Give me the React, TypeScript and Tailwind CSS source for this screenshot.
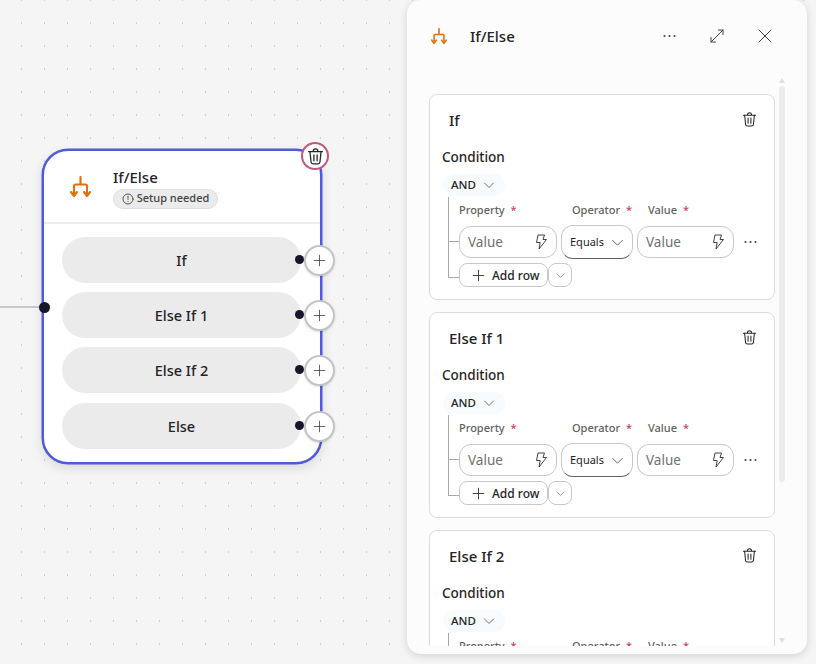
import React from "react";

const font = { fontFamily: '"Noto Sans", "Open Sans", sans-serif' };

function BranchIcon({ size = 21 }: { size?: number }) {
  return (
    <svg width={size} height={size} viewBox="0 0 21 21" fill="none" stroke="#e07010" strokeWidth="2.1" strokeLinecap="round" strokeLinejoin="round">
      <path d="M10.5 1v7.5M4 19.5V10a1.5 1.5 0 0 1 1.5-1.5h10A1.5 1.5 0 0 1 17 10v9.5" />
      <path d="M1 16l3 4 3-4M14 16l3 4 3-4" />
    </svg>
  );
}

function TrashIcon({ size = 16, sw = 1.1 }: { size?: number; sw?: number }) {
  return (
    <svg width={size} height={size} viewBox="0 0 16 16" fill="none" stroke="#242424" strokeWidth={sw} strokeLinecap="round" strokeLinejoin="round">
      <path d="M1.5 3.5h13M5.8 3.5V3a2.2 2.2 0 0 1 4.4 0v.5" />
      <path d="M2.8 3.5l1 9.7a2 2 0 0 0 2 1.8h4.4a2 2 0 0 0 2-1.8l1-9.7" />
      <path d="M6.5 6.5v5.5M9.5 6.5v5.5" />
    </svg>
  );
}

function Chevron({ size = 12, color = "#616161" }: { size?: number; color?: string }) {
  return (
    <svg width={size} height={size} viewBox="0 0 12 12" fill="none" stroke={color} strokeWidth="0.9" strokeLinecap="round" strokeLinejoin="round">
      <path d="M1.5 4l4.5 4.5L10.5 4" />
    </svg>
  );
}

function Bolt() {
  return (
    <svg width="14" height="16" viewBox="0 0 14 16" fill="none" stroke="#424242" strokeWidth="1" strokeLinejoin="round">
      <path d="M4 1h6.5L9 5.5h3.5L5 15l1.2-6.5H2.5z" />
    </svg>
  );
}

function Dots({ color = "#424242" }: { color?: string }) {
  return (
    <svg width="13" height="4" viewBox="0 0 13 4" fill={color}>
      <circle cx="1.5" cy="2" r="1.05" />
      <circle cx="6.5" cy="2" r="1.05" />
      <circle cx="11.5" cy="2" r="1.05" />
    </svg>
  );
}

function Plus({ size = 16, sw = 1 }: { size?: number; sw?: number }) {
  return (
    <svg width={size} height={size} viewBox="0 0 16 16" fill="none" stroke="#424242" strokeWidth={sw} strokeLinecap="round">
      <path d="M8 1.5v13M1.5 8h13" />
    </svg>
  );
}

function Label({ text, className }: { text: string; className: string }) {
  return (
    <div className={`text-[11px] leading-4 text-[#616161] font-medium ${className}`}>
      {text} <span className="text-[#c4406a] ml-[3px]">*</span>
    </div>
  );
}

function ValueInput({ width }: { width: string }) {
  return (
    <div className={`${width} h-8 rounded-[12px] border border-[#c8c8c8] bg-white flex items-center justify-between pl-2 pr-[8px] text-[13.5px] text-[#707070]`}>
      <span>Value</span>
      <Bolt />
    </div>
  );
}

function Section({ title }: { title: string }) {
  return (
    <div className="w-[346px] h-[206px] shrink-0 rounded-[8px] border border-[#dcdcdc] bg-white relative pl-3 pr-3">
      <div className="flex items-center justify-between pl-[7px] pr-[5px] h-[49px]">
        <span className="text-[15px] leading-[22px] font-medium text-[#242424]">{title}</span>
        <TrashIcon size={15} />
      </div>
      <div className="text-[13.5px] leading-5 font-medium text-[#242424] mt-[3px]">Condition</div>
      <div className="mt-[7px] ml-[1px] w-[62px] h-[22px] rounded-full bg-[#f8fbfd] flex items-center pl-2 gap-[7px] text-[11.5px] font-medium text-[#242424]">
        <span>AND</span>
        <Chevron />
      </div>
      <div className="mt-px ml-[6px] border-l border-[#a8a8a8] h-[81px] relative">
        <div className="absolute left-0 top-[44px] w-[10px] border-t border-[#a8a8a8]" />
        <div className="absolute left-0 bottom-0 w-[10px] border-t border-[#a8a8a8]" />
        <div className="pl-[10px]">
          <div className="flex h-[29px] pt-[5px]">
            <Label text="Property" className="w-[113px]" />
            <Label text="Operator" className="w-[76px]" />
            <Label text="Value" className="" />
          </div>
          <div className="flex items-center gap-1 h-8">
            <ValueInput width="w-[98px]" />
            <div className="w-[72px] h-[34px] rounded-[12px] border border-[#c8c8c8] border-b-[#616161] bg-white flex items-center justify-between pl-2 pr-2 pt-px text-[11px] text-[#242424]">
              <span>Equals</span>
              <Chevron size={13} />
            </div>
            <ValueInput width="w-[97px]" />
            <div className="ml-[6px]"><Dots /></div>
          </div>
          <div className="flex mt-[5px]">
            <div className="w-[89px] h-6 rounded-[8px] border border-[#c8c8c8] bg-white flex items-center gap-[7px] pl-[12px] pt-px text-[12px] font-medium text-[#242424]">
              <Plus size={13} sw={1.2} />
              <span>Add row</span>
            </div>
            <div className="w-6 h-6 rounded-[8px] border border-[#c8c8c8] bg-white flex items-center justify-center">
              <Chevron size={9} />
            </div>
          </div>
        </div>
      </div>
    </div>
  );
}

function Row({ label, mt }: { label: string; mt: string }) {
  return (
    <div className={`relative ${mt} w-[239px] h-[46px] rounded-full bg-[#ebebeb] flex items-center justify-center pt-[2px] text-[14.5px] font-medium text-[#242424]`}>
      {label}
      <span className="absolute left-[232.5px] top-[18px] w-[9px] h-[9px] rounded-full bg-[#16162a]" />
      <span className="absolute left-[242px] top-[8px] w-[31px] h-[31px] rounded-full bg-white border-2 border-[#c4c4c4] shadow-sm flex items-center justify-center">
        <Plus size={13} />
      </span>
    </div>
  );
}

export default function App() {
  return (
    <div
      style={font}
      className="relative w-[816px] h-[664px] overflow-hidden bg-[#f5f5f5] bg-[radial-gradient(circle,#a8a8a8_0.7px,transparent_1px)] bg-[length:23px_23px] bg-[position:10px_-11.5px]"
    >
      {/* edge into the node */}
      <div className="absolute left-0 top-[306px] w-[44px] border-t-2 border-[#c8c8c8]" />

      {/* node */}
      <div className="absolute left-[42px] top-[149px] w-[280px] h-[315px] rounded-[26px] border-2 border-[#4f5bd8] bg-white shadow-[0_0_0_0.5px_#4f5bd8,0_4px_12px_rgba(0,0,0,0.12)]">
        <div className="h-[73px] border-b-2 border-[#ececec] flex items-center pl-[26px]">
          <BranchIcon size={21} />
          <div className="ml-[22px]">
            <div className="text-[15px] leading-5 font-medium text-[#242424] mt-[2px]">If/Else</div>
            <div className="mt-[2px] h-5 w-[105px] rounded-full bg-[#ebebeb] border border-[#dedede] flex items-center justify-center gap-[3px] text-[11px] font-medium text-[#424242]">
              <svg width="12" height="12" viewBox="0 0 12 12" fill="none" stroke="#424242" strokeWidth="0.9" strokeLinecap="round">
                <circle cx="6" cy="6" r="5" />
                <path d="M6 3.2v3.2M6 8.5v.2" />
              </svg>
              <span>Setup needed</span>
            </div>
          </div>
        </div>
        <div className="pl-[18px] pt-[13px]">
          <Row label="If" mt="" />
          <Row label="Else If 1" mt="mt-[9px]" />
          <Row label="Else If 2" mt="mt-[9px]" />
          <Row label="Else" mt="mt-[10px]" />
        </div>
        <span className="absolute -left-[5.5px] top-[151px] w-[11px] h-[11px] rounded-full bg-[#16162a]" />
        <span className="absolute left-[257px] -top-[9px] w-[28px] h-[28px] rounded-full bg-white border-2 border-[#c4577a] flex items-center justify-center">
          <TrashIcon size={17} sw={1.2} />
        </span>
      </div>

      {/* panel */}
      <div className="absolute left-[407px] top-0 w-[400px] h-[654px] rounded-[14px] bg-[#fcfcfc] shadow-[0_2px_8px_rgba(0,0,0,0.14)] overflow-hidden">
        <div className="h-[72px] flex items-center pl-[24px] pr-[35px]">
          <BranchIcon size={16} />
          <span className="ml-[23px] text-[15px] font-medium text-[#242424]">If/Else</span>
          <div className="ml-auto flex items-center">
            <Dots />
            <svg className="ml-[34px]" width="14" height="14" viewBox="0 0 14 14" fill="none" stroke="#424242" strokeWidth="1" strokeLinecap="round" strokeLinejoin="round">
              <path d="M8.5 1h4.5v4.5M13 1L1 13M1 8.5V13h4.5" />
            </svg>
            <svg className="ml-[34px]" width="14" height="14" viewBox="0 0 14 14" fill="none" stroke="#424242" strokeWidth="1" strokeLinecap="round">
              <path d="M1 1l12 12M13 1L1 13" />
            </svg>
          </div>
        </div>
        <div className="relative h-[574px] overflow-hidden pl-[22px] pt-[22px] flex flex-col gap-3">
          <Section title="If" />
          <Section title="Else If 1" />
          <Section title="Else If 2" />
          <div className="absolute right-[22px] top-[14px] w-[6px] h-[396px] rounded-full bg-[#ececec]" />
          <div className="absolute right-[22px] top-[6px] w-0 h-0 border-x-[3px] border-x-transparent border-b-[5px] border-b-[#e0e0e0]" />
          <div className="absolute right-[22px] bottom-[3px] w-0 h-0 border-x-[3px] border-x-transparent border-t-[5px] border-t-[#e0e0e0]" />
        </div>
      </div>
    </div>
  );
}
